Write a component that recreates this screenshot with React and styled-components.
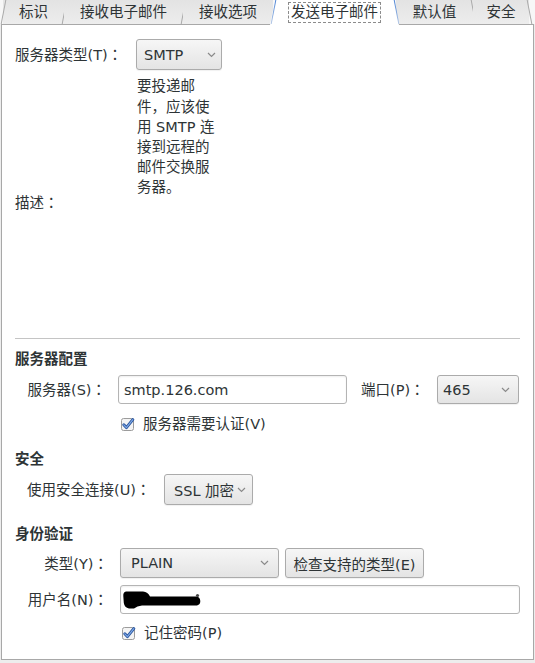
import React from 'react'
import styled, { createGlobalStyle } from 'styled-components'

const GlobalStyle = createGlobalStyle`
  html, body {
    margin: 0;
    padding: 0;
    background: #ededed;
  }
  body {
    font-family: "DejaVu Sans", "Noto Sans CJK SC", sans-serif;
    font-size: 14.5px;
    color: #2e3436;
  }
`

const Page = styled.div`
  width: 535px;
  height: 663px;
  overflow: hidden;
`

const TabBar = styled.div`
  display: flex;
  height: 24px;
  padding-left: 3px;
  background: #f7f7f7;
`

const Tab = styled.div`
  position: relative;
  flex: none;
  width: ${p => p.$w}px;
  height: 24px;
  display: flex;
  align-items: center;
  justify-content: center;
  background: ${p => (p.$active ? 'transparent' : 'linear-gradient(#e3e3e3, #ededed)')};
  z-index: ${p => (p.$active ? 1 : 0)};

  &::before {
    content: '';
    display: ${p => (p.$active ? 'block' : 'none')};
    position: absolute;
    top: 0;
    bottom: -1px;
    left: -3px;
    right: -3px;
    background: #fff;
    clip-path: polygon(5px 0, calc(100% - 5px) 0, 100% 100%, 0 100%);
  }
`

const Edge = styled.span`
  position: absolute;
  top: 0;
  height: 24px;
  width: 1px;
  ${p => (p.$left ? 'left: -0.5px;' : 'right: -0.5px;')}
  background: ${p => (p.$blue ? 'linear-gradient(#4a82d4, #b4c8e6)' : '#a9a9a9')};
  transform: skewX(${p => (p.$dir === '/' ? -11 : 11)}deg);
`

const TabLabel = styled.span`
  position: relative;
  line-height: 19px;
  padding: 0 2px;
  border: 1px dashed ${p => (p.$focus ? '#8c8c8c' : 'transparent')};
  white-space: nowrap;
`

const Panel = styled.div`
  box-sizing: border-box;
  margin-left: 1px;
  width: 533px;
  height: 636px;
  border: 1px solid #a8a8a8;
  background: #fff;
  padding: 14px 13px 0 13px;
`

const TopGrid = styled.div`
  display: grid;
  grid-template-columns: 121px auto;
  row-gap: 6px;
  justify-content: start;
`

const Label = styled.div`
  line-height: 20px;
  white-space: nowrap;
  align-self: ${p => p.$align || 'center'};
`

/* full-width punctuation sits centred in its box, as in the reference font */
const Punct = styled.span`
  font-family: "Noto Sans CJK JP", "Noto Sans CJK SC", sans-serif;
`

const Description = styled.div`
  margin-left: 1px;
  margin-bottom: 16px;
  line-height: 20px;

  span.line {
    display: block;
    white-space: nowrap;
  }
`

const Separator = styled.div`
  margin-top: 125px;
  height: 1px;
  background: #c4c4c4;
`

const Heading = styled.div`
  font-weight: bold;
  line-height: 20px;
  margin-top: ${p => p.$mt}px;
`

const FormRow = styled.div`
  display: flex;
  align-items: center;
  margin-top: ${p => p.$mt}px;
  padding-left: 12px;
`

const RowLabel = styled.div`
  flex: none;
  box-sizing: border-box;
  width: ${p => p.$w}px;
  margin-left: ${p => p.$ml || 0}px;
  text-align: ${p => p.$align || 'right'};
  padding-right: ${p => (p.$align === 'left' ? 0 : 12)}px;
  white-space: nowrap;
  line-height: 20px;
`

const Combo = styled.div`
  flex: none;
  box-sizing: border-box;
  display: flex;
  align-items: center;
  width: ${p => p.$w}px;
  height: ${p => p.$h}px;
  padding: 0 ${p => p.$pr || 0}px 0 ${p => p.$pl || 0}px;
  border: 1px solid #ababab;
  border-radius: 3px;
  background: linear-gradient(#f6f6f6, #e4e4e4);
  box-shadow: 0 1px 1px rgba(0, 0, 0, 0.06);
  white-space: nowrap;
`

const ComboText = styled.span`
  flex: ${p => (p.$tight ? 'none' : '1')};
`

const Button = styled(Combo)`
  justify-content: center;
  margin-left: ${p => p.$ml || 0}px;
`

const Entry = styled.div`
  box-sizing: border-box;
  display: flex;
  align-items: center;
  flex: ${p => (p.$w ? 'none' : '1')};
  width: ${p => (p.$w ? `${p.$w}px` : 'auto')};
  height: ${p => p.$h}px;
  padding-left: ${p => p.$pl}px;
  border: 1px solid #b4b4b4;
  border-radius: 3px;
  background: #fff;
  box-shadow: inset 0 1px 2px rgba(0, 0, 0, 0.07);
  white-space: nowrap;
`

const CheckRow = styled.div`
  display: flex;
  align-items: center;
  gap: 9px;
  line-height: 20px;
  margin-top: ${p => p.$mt}px;
  padding-left: ${p => p.$pl}px;
`

const Chevron = () => (
  <svg width="9" height="6" viewBox="0 0 9 6" style={{ flex: 'none', marginLeft: 3 }}>
    <polyline points="1,1 4.5,4.5 8,1" fill="none" stroke="#8a8a8a" strokeWidth="1.2" />
  </svg>
)

const CheckBox = () => (
  <svg width="13" height="13" viewBox="0 0 13 13" style={{ overflow: 'visible', flex: 'none' }}>
    <rect x="0.5" y="0.5" width="12" height="12" rx="2" fill="#f4f4f4" stroke="#9c9c9c" />
    <path d="M2.8 6.8 L5.4 9.6 L11.8 1.6" fill="none" stroke="#28549c" strokeWidth="3" strokeLinecap="round" strokeLinejoin="round" />
    <path d="M2.8 6.8 L5.4 9.6 L11.8 1.6" fill="none" stroke="#7fa8e6" strokeWidth="1.2" strokeLinecap="round" strokeLinejoin="round" />
  </svg>
)

const Redacted = () => (
  <svg width="82" height="24" viewBox="0 0 82 24" style={{ flex: 'none' }}>
    <path
      d="M4 3.5 Q1 4 1.3 8 L1.8 15 Q2.5 19.5 7 20.5 L12 20.5 Q15 18 20 17.5 L75 17.5 Q78.5 16.5 78.3 13 Q78 8.5 74 8.5 L28 8.5 Q26 3.8 21 3.5 Z"
      fill="#000"
    />
    <circle cx="75.5" cy="7.5" r="1.6" fill="#444" />
  </svg>
)

const tabs = [
  { label: '标识', w: 61 },
  { label: '接收电子邮件', w: 119 },
  { label: '接收选项', w: 90 },
  { label: '发送电子邮件', w: 123 },
  { label: '默认值', w: 77 },
  { label: '安全', w: 56 },
]
const activeTab = 3

const description = ['要投递邮', '件，应该使', '用 SMTP 连', '接到远程的', '邮件交换服', '务器。']

const Colon = () => <Punct>：</Punct>

const App = () => {
  return (
    <Page>
      <GlobalStyle />
      <TabBar>
        {tabs.map((t, i) => {
          const active = i === activeTab
          return (
            <Tab key={t.label} $w={t.w} $active={active}>
              {i === 0 && <Edge $left $dir="/" />}
              {active && <Edge $left $blue $dir="/" />}
              {i !== activeTab - 1 && (
                <Edge $dir={i < activeTab ? '/' : '\\'} $blue={active} />
              )}
              <TabLabel $focus={active}>{t.label}</TabLabel>
            </Tab>
          )
        })}
      </TabBar>

      <Panel>
        <TopGrid>
          <Label>服务器类型(T)<Colon /></Label>
          <Combo $w={86} $h={31} $pl={7} $pr={5}>
            <ComboText>SMTP</ComboText>
            <Chevron />
          </Combo>
          <Label $align="end">描述<Colon /></Label>
          <Description>
            {description.map(line => (
              <span className="line" key={line}>
                {line.split('，').map((part, j) => (
                  <React.Fragment key={j}>
                    {j > 0 && <Punct>，</Punct>}
                    {part}
                  </React.Fragment>
                ))}
              </span>
            ))}
          </Description>
        </TopGrid>

        <Separator />

        <Heading $mt={10}>服务器配置</Heading>
        <FormRow $mt={6}>
          <RowLabel $w={91}>服务器(S)<Colon /></RowLabel>
          <Entry $w={229} $h={29} $pl={5}>smtp.126.com</Entry>
          <RowLabel $w={76} $ml={14} $align="left">端口(P)<Colon /></RowLabel>
          <Combo $w={82} $h={29} $pl={5} $pr={8}>
            <ComboText>465</ComboText>
            <Chevron />
          </Combo>
        </FormRow>
        <CheckRow $mt={10} $pl={106}>
          <CheckBox />
          <span>服务器需要认证(V)</span>
        </CheckRow>

        <Heading $mt={15}>安全</Heading>
        <FormRow $mt={5}>
          <RowLabel $w={137} $align="left">使用安全连接(U)<Colon /></RowLabel>
          <Combo $w={89} $h={31} $pl={9} $pr={8}>
            <ComboText $tight>SSL 加密</ComboText>
            <Chevron />
          </Combo>
        </FormRow>

        <Heading $mt={19}>身份验证</Heading>
        <FormRow $mt={4}>
          <RowLabel $w={93}>类型(Y)<Colon /></RowLabel>
          <Combo $w={159} $h={30} $pl={10} $pr={9}>
            <ComboText>PLAIN</ComboText>
            <Chevron />
          </Combo>
          <Button $w={139} $h={30} $ml={6}>检查支持的类型(E)</Button>
        </FormRow>
        <FormRow $mt={7}>
          <RowLabel $w={93}>用户名(N)<Colon /></RowLabel>
          <Entry $h={29} $pl={1}>
            <Redacted />
          </Entry>
        </FormRow>
        <CheckRow $mt={9} $pl={107}>
          <CheckBox />
          <span>记住密码(P)</span>
        </CheckRow>
      </Panel>
    </Page>
  )
}

export default App
